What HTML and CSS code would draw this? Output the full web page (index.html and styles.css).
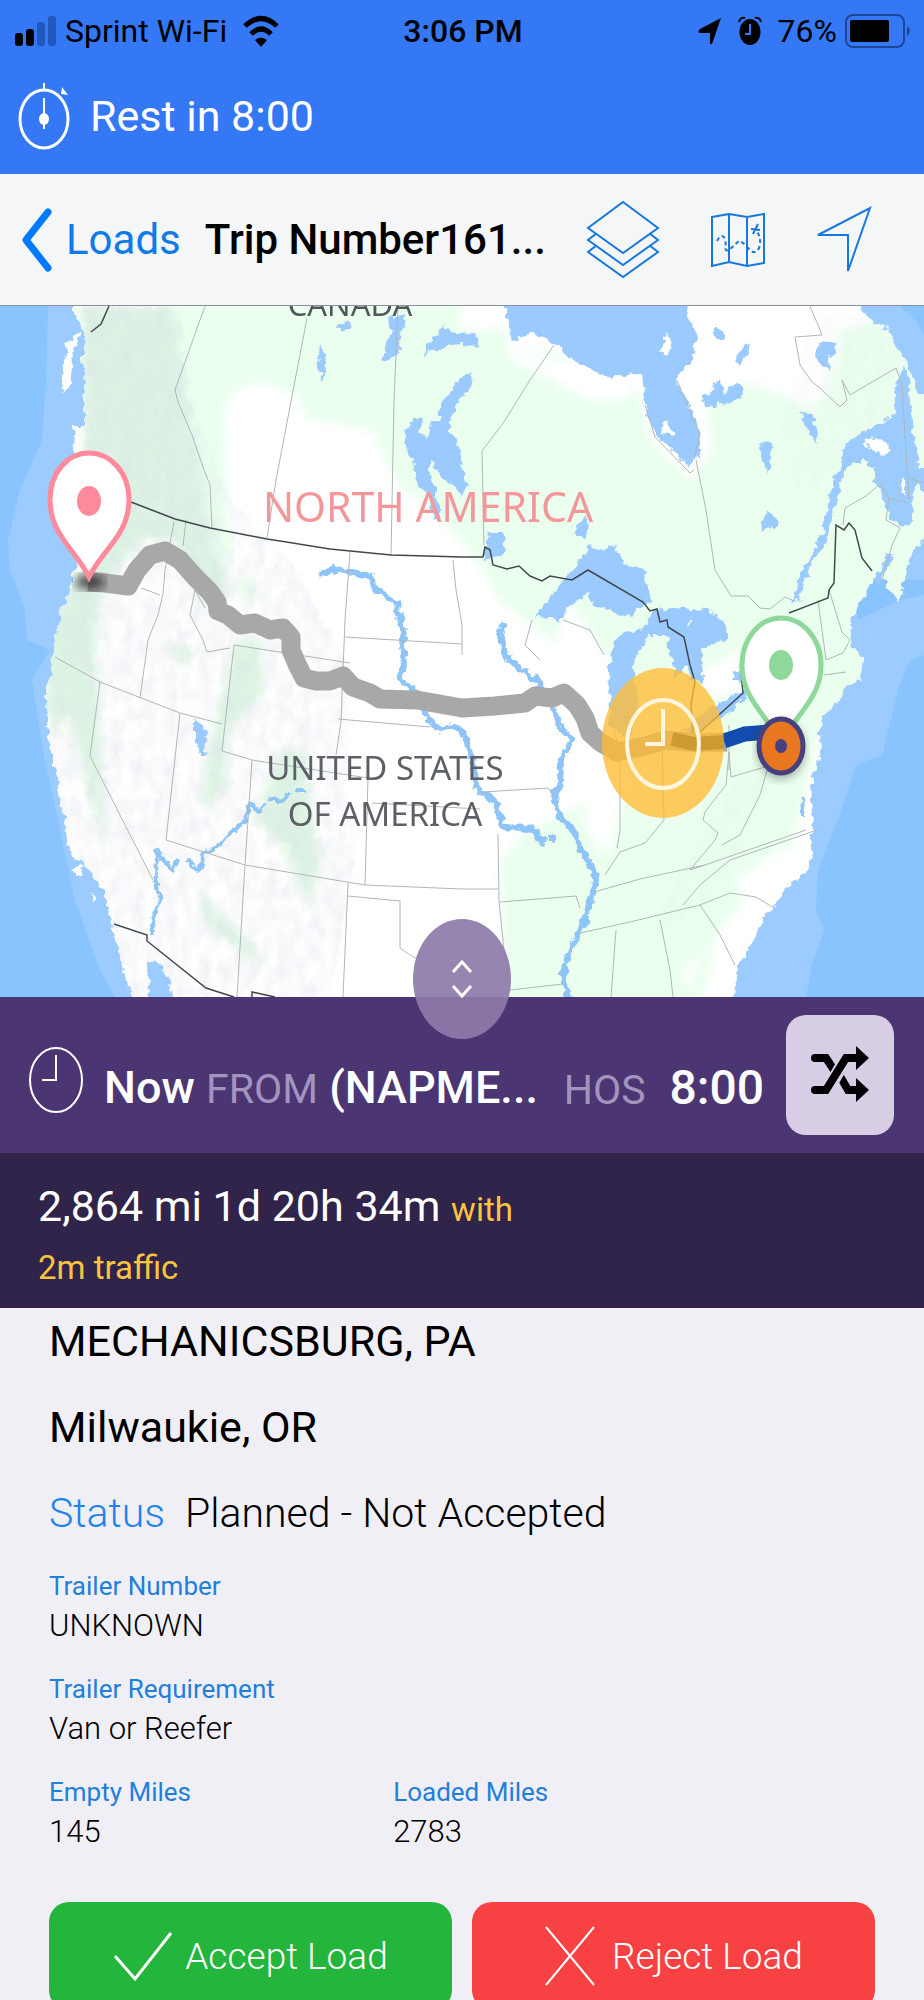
FILE: index.html
```html
<!DOCTYPE html>
<html lang="en">
<head>
<meta charset="utf-8">
<meta name="viewport" content="width=device-width, initial-scale=1">
<title>Trip Number161...</title>
<link rel="stylesheet" href="styles.css">
</head>
<body>
<div class="app">
  <header class="top">
    <div class="status">
      <div class="status-left">
        <svg width="42" height="32" viewBox="0 0 42 32" aria-hidden="true"><rect x="0" y="18" width="8" height="13" rx="3"/><rect x="11" y="14" width="8" height="17" rx="3"/><g fill="#2257bd"><rect x="22" y="7" width="8" height="24" rx="3"/><rect x="33" y="1" width="8" height="30" rx="3"/></g></svg>
        <span>Sprint Wi-Fi</span>
        <svg class="wifi" width="36" height="32" viewBox="0 0 36 32" aria-hidden="true"><g fill="none" stroke="#000" stroke-width="5"><path d="M2 11Q18-4 34 11"/><path d="M8 19Q18 9 28 19"/></g><path d="M12 25Q18 20 24 25L18 32Z"/></svg>
      </div>
      <span class="time">3:06 PM</span>
      <div class="status-right">
        <svg width="24" height="28" viewBox="0 0 24 28" aria-hidden="true"><path d="M23 1 14 27Q12 28 12 25V16H2Q-1 15 2 12Z"/></svg>
        <svg width="24" height="30" viewBox="0 0 24 30" aria-hidden="true"><ellipse cx="12" cy="16" rx="10.500" ry="13"/><path d="M1 6Q2 1 7 2M17 2Q22 1 23 6" fill="none" stroke="#000" stroke-width="2"/><path d="M12 8V18H7" fill="none" stroke="#3478f6" stroke-width="2"/></svg>
        <span>76%</span>
        <svg class="battery" width="66" height="36" viewBox="0 0 66 36" aria-hidden="true"><rect x="1" y="2" width="58" height="32" rx="7" fill="none" stroke="#1d4699" stroke-width="2"/><rect x="5" y="7" width="39" height="22" rx="2"/><path d="M62 13Q68 18 62 23Z" fill="#1d4699"/></svg>
      </div>
    </div>
    <div class="rest">
      <svg width="52" height="68" viewBox="0 0 52 68" aria-hidden="true"><g fill="none" stroke="#fff"><ellipse cx="26" cy="37" rx="24" ry="29" stroke-width="3"/><path d="M26 1V8M26 16V47" stroke-width="2"/></g><ellipse cx="26" cy="37" rx="5" ry="6" fill="#fff"/><path d="M43 12 44 5 50 13Z" fill="#fff"/></svg>
      <span>Rest in 8:00</span>
    </div>
  </header>

  <nav class="nav">
    <a class="back" href="#loads">
      <svg width="32" height="64" viewBox="0 0 32 64" aria-hidden="true"><path d="M28 4 6 32 28 60" fill="none" stroke="#007aff" stroke-width="7" stroke-linecap="round" stroke-linejoin="round"/></svg>
      <span>Loads</span>
    </a>
    <h1>Trip Number161...</h1>
    <div class="tools">
      <button type="button" aria-label="Map layers"><svg width="74" height="80" viewBox="0 0 74 80"><g fill="#f5f6f8" stroke="#1579e0" stroke-width="2"><path d="M37 25 72 52 37 77 2 52Z"/><path d="M37 13 72 40 37 65 2 40Z"/><path d="M37 2 72 28 37 53 2 28Z"/></g></svg></button>
      <button type="button" aria-label="Route map"><svg width="56" height="56" viewBox="0 0 56 56"><g fill="none" stroke="#1579e0" stroke-width="2"><path d="M2 5 19 2 37 5 54 2V51L37 54 19 50 2 54ZM19 2V50M37 5V54"/><path d="M41 17 50 18M48 12 43 22"/><path d="M7 29Q12 20 15 27C17 35 13 40 19 38L29 29Q33 30 38 36 45 44 49 36 52 26 47 20" stroke-dasharray="4 3"/></g></svg></button>
      <button type="button" aria-label="My location"><svg width="56" height="68" viewBox="0 0 56 68"><path d="M54 2 32 65V29H2Z" fill="none" stroke="#1579e0" stroke-width="2"/></svg></button>
    </div>
  </nav>

  <section class="map" aria-label="Route map">
    <svg viewBox="0 306 924 691" role="img">
      <defs>
        <filter id="soft" x="-10%" y="-10%" width="120%" height="120%"><feGaussianBlur stdDeviation="5"/></filter>
        <filter id="rough" filterUnits="userSpaceOnUse" x="-10" y="296" width="944" height="711"><feTurbulence type="fractalNoise" baseFrequency="0.14" numOctaves="2" seed="7" result="t"/><feDisplacementMap in="SourceGraphic" in2="t" scale="9" xChannelSelector="R" yChannelSelector="G"/></filter>
        <filter id="relief" x="0" y="0" width="100%" height="100%"><feTurbulence type="fractalNoise" baseFrequency="0.09 0.05" numOctaves="3" seed="4"/><feColorMatrix values="0 0 0 0 .7  0 0 0 0 .72  0 0 0 0 .8  .7 0 0 0 -.2" result="n"/><feComposite in="n" in2="SourceGraphic" operator="in" result="c"/><feGaussianBlur in="c" stdDeviation="1"/></filter>
        <clipPath id="land"><path id="coast" d="M70 296 80 325 86 340 82 360 85 380 83 400 86 415 82 428 73 425 74 448 90 470 82 520 75 570 62 610 54 640 52 670 46 690 47 722 51 755 58 775 60 800 67 832 71 855 82 862 94 878 104 892 111 922 118 948 124 975 136 1007H149L148 961 158 963 170 980 173 1007H734L738 965 748 950 756 936 765 915 774 908 784 890 795 881 806 874 812 856 810 838 814 825 810 800 813 775 821 755 820 730 824 715 840 700 846 687 860 678 863 658 852 645 850 622 862 600 872 580 880 570 886 584 898 601 906 570 914 548 934 530V506L918 484 914 490 912 520 903 528 890 518 885 508 880 490 873 482 875 470 862 460 848 468 842 480 834 510 826 545 812 562 802 590 800 600 792 603 800 575 811 555 823 530 829 500 833 477 840 470 844 444 893 416 895 390 899 380 902 366 907 370 909 390 912 420 914 440 918 465 934 470V400L918 395 908 362 902 356 888 330 870 320 852 296Z"/></clipPath>
      </defs>
      <rect y="306" width="924" height="691" fill="#8ac4ff"/>
      <path fill="#9cccff" d="M48 306 46 380 42 440 20 490 8 540 10 570 25 610 27 640 50 650 32 680 45 760 58 820 75 900 100 970 115 997H200V306ZM924 655 910 660 898 690 882 755 856 765 838 820 818 870 816 910 824 930 812 965 806 997H700V560H850L858 620 900 600 924 595ZM850 306H900L915 320 924 335V580H800Z"/>
      <g filter="url(#rough)">
        <use href="#coast" fill="#fff"/>
        <g clip-path="url(#land)">
          <g filter="url(#soft)" fill="#eaffee">
            <path fill="#ddf4e4" d="M80 306H180L195 400 215 500 228 590 205 610 190 580 175 540 140 540 118 570 100 600 95 640 98 700 106 850 90 800 65 690 45 720 50 620 80 570 86 500Z"/>
            <path d="M170 296H500L510 350 560 352 600 385 640 390 650 440 690 480 712 450 705 390 760 385 810 410 835 370 840 330 880 320 940 360V600L850 700 824 720 790 850 760 880 720 930 700 1007H505L500 860 530 830 590 800 600 860 640 760 600 680 500 600 482 570 460 540 420 500 395 480 372 430 305 418 300 400 262 380 235 390 224 410 226 500 232 560 215 560Z"/>
            <path d="M245 600Q230 590 240 580T260 600Z"/>
            <path fill="#def6e3" d="M235 640H262L262 695 228 730 225 790 200 810 215 720ZM165 640 195 650 185 668ZM255 820 280 750 305 750 310 800 320 860 310 910 285 850ZM198 890 255 950 260 970 205 920ZM65 640 95 650 98 780 105 840 85 780 68 710 55 740 48 690Z"/>
            <path fill="#fff" d="M650 296H850L825 350 830 400 760 385 690 395ZM500 296 515 350 600 370 640 385 620 402 590 400 510 360ZM460 296H505V330H460ZM568 600 610 660 640 720 610 850 585 830 590 760 540 700ZM800 850 775 870 745 900 735 880 780 850ZM715 940 755 910 700 960 690 990 680 975ZM690 675 740 650 745 685 715 700Z"/>
          </g>
          <g filter="url(#relief)"><path fill="#fff" d="M85 306H180L190 400 230 500 290 560 345 660 355 860 330 997H130L40 760 50 620 85 560Z"/><path fill="#fff" d="M815 306 900 330 890 420 800 500 780 430ZM735 780 775 770 725 890 650 940 670 890Z" opacity=".4"/></g>
        </g>
        <path fill="#fff" d="M80 330 72 365 70 385 63 393 62 378 66 345ZM862 440 870 437 884 440 891 450 884 456 872 450ZM72 868 84 866 83 873 75 873ZM93 892 99 898 94 903ZM901 478H904V492H901Z"/>
        <g fill="#9acaff">
          <path d="M503 296 512 342 530 332 555 345 575 362 609 377 642 373 645 403 654 433 675 453 689 467 696 455 700 462 700 433 690 405 675 380 692 360 697 337 683 296ZM535 617 559 587 575 567 590 545 600 550 615 547 625 565 642 567 652 600 637 611 622 617 609 610 595 607 589 593 572 603 559 622 550 618ZM655 610 672 608 709 610 722 620 729 637 712 645 702 650 703 683 690 680 687 665 675 680 667 635 649 635 640 650 632 665 638 700 629 740 610 725 609 670 614 640 625 632 642 629ZM679 733 712 707 750 687 746 697 729 713 702 730ZM731 680 742 661 748 666 744 685ZM485 545 490 532 502 532 506 550 500 556 484 560ZM575 528 585 515 590 535 585 539 575 535ZM761 520 769 511 778 520 778 526 762 530Z"/>
          <path d="M382 360 391 330 388 320 403 314 405 325 399 338 400 352 388 360ZM320 343 324 354 326 372 322 382 318 368ZM337 328 345 320 353 325 351 331ZM422 357 430 340 440 333 442 325 454 333 474 332 480 347 464 344 448 345 440 351 429 349ZM403 443 408 425 416 416 423 418 420 432 428 440 431 423 440 420 440 403 450 395 462 376 471 372 472 385 458 400 450 418 450 433 459 445 463 465 466 485 462 495 448 480 442 480 432 460 428 470 434 485 441 518 434 518 427 490 417 487 413 460ZM714 327 725 335 725 341 714 335ZM737 353 750 343 748 355 738 365ZM701 395 714 392 713 382 721 383 724 393 734 384 742 386 743 396 724 405 717 400 714 408 704 407ZM816 355 822 340 835 343 836 353 828 357 830 370 821 365ZM799 411 813 415 819 445 808 430ZM761 442 773 443 768 475 762 456ZM194 721 204 727 207 737 205 750 210 754 201 754 194 739ZM886 552 893 555 884 575 880 588 877 580Z"/>
        </g>
        <path fill="#fff" d="M664 333 672 340 670 350 663 355 661 350 666 340ZM660 428 665 420 668 426 674 435 662 433ZM688 620 692 622 690 625 688 624Z"/>
        <g fill="none" stroke="#8fc4f7" stroke-linejoin="round">
          <path stroke-width="6" d="M320 575 333 569 353 572 372 577 373 588 384 594 397 604 399 618 404 630 402 645 404 665 399 680 411 687 420 697 427 718 440 730 453 726 465 735 472 762 478 790 494 800 504 828 515 826 530 828 545 843M505 622 500 635 505 654 520 670 539 682 552 705 560 727 572 740 561 760 560 787 553 795 562 820 575 832 580 850 594 870 596 885 590 900 585 920 578 935 568 955 563 975 568 997M548 838 556 838"/>
          <path stroke-width="4" d="M305 790H295M290 792 283 801 268 799M263 802 260 812 249 804 247 818 235 830 213 850 204 852 199 871 187 860M178 860 174 872 164 860 157 851 156 880 160 902 152 920 153 935M802 795 803 815"/>
        </g>
      </g>
      <g fill="none" stroke="#b0b6b6" stroke-width="1">
        <path d="M205 306 175 390 178 402 192 435 203 467 210 485 212 528M307 318 276 480 267 538M398 306 394 400 391 556M554 345 530 380 504 422 482 451 484 545M696 460 706 510 715 570 731 596 748 596 760 608 770 609 785 597 792 600M174 522 165 570 163 594 158 615 148 640 140 698M186 520 183 546M141 588 160 595M350 552 345 620 341 722 336 755M345 637 462 644M453 560 456 590 462 625 462 655M55 657 100 682 180 713 222 724M100 682 90 756 153 880M180 713 166 840 245 865 365 885 462 889 498 889M234 645 350 663M234 645 222 751 252 760 335 773 368 778 365 885M252 760 245 865 237 997M338 719 430 727M372 803 462 808 480 809M348 883 343 997M348 896 400 901 400 948 410 955 420 960 485 970M498 834 499 901 504 950 510 990 563 984M482 792 548 788 553 795M500 902 576 896 580 908M580 933 630 922 700 905 730 893 756 897 774 908M594 892 640 879 705 865 806 830M616 930 611 997M660 920 670 970 673 997M700 905 720 935 735 965M662 740 664 820 645 843 620 852 605 875M612 720 620 755 620 830 617 848M705 865 690 870 715 840 718 833 703 820 705 812 726 785 729 752 731 777 765 767M768 767 760 795 740 835 722 845M729 725V770M817 830 730 860 700 885 683 905M694 470 690 473 655 437 645 405M677 380 700 435 694 460M810 306 822 335 795 337 800 365 812 382 820 388 840 407 847 400 842 380 850 395 896 368 902 385 909 500M909 478 924 483M880 484 889 498 908 503M843 525 845 508 866 496 880 484M889 498 886 520 900 528 892 545 882 580M829 590 842 632 850 640 843 653 826 660 818 600M824 675 846 672M205 608 195 590 190 615 203 640 207 652 230 648M532 620 525 645 540 660M563 620 590 630 604 655"/>
      </g>
      <g fill="none" stroke="#42494d" stroke-width="1.500">
        <path d="M109 306 101 324 91 332M131 502 175 519 210 528 267 539 330 549 391 555 462 557H483L485 547 490 550 493 565 507 569 519 566 530 576 542 581 550 576 572 580 588 570 643 602 650 611 657 609 660 622 667 620 668 627 684 637 690 665 695 682 691 704 693 733M789 613 828 598 829 590 834 583 836 525 844 530 849 523 855 530 862 558 872 571M700 732 743 693 741 673"/>
        <path d="M114 924 147 935 147 941 206 988 234 997M252 997V992L275 997"/>
      </g>
      <path fill="none" stroke="#a8a8a8" stroke-width="19" stroke-linejoin="round" d="M88 582 105 583 128 586 137 570 150 555 165 551 180 560 195 577 210 592 217 602 218 611 228 615 240 625 255 623 270 630 283 628 291 637 291 650 297 664 304 678 316 681 330 681 343 676 353 687 370 693 380 699 417 700 462 708 495 706 525 703 535 696 552 698 564 693 577 705 585 718 590 733 600 742 617 752 645 746 665 740 700 743 727 742"/>
      <path fill="none" stroke="#124cae" stroke-width="15" d="M724 741 745 734 770 732"/>
      <ellipse cx="663" cy="743" rx="61" ry="75" fill="#ffbc35" fill-opacity=".78"/>
      <path fill="none" stroke="#8e6500" stroke-opacity=".35" stroke-width="14" d="M672 739 695 744 724 742"/>
      <g fill="none" stroke="#fff6dd" stroke-width="4"><ellipse cx="663" cy="744" rx="36" ry="44"/><path d="M663 709V744H645"/></g>
      <g class="map-labels" text-anchor="middle">
        <text class="canada" x="350" y="316">CANADA</text>
        <text class="continent" x="428" y="522">NORTH AMERICA</text>
        <text x="385" y="780">UNITED STATES</text>
        <text x="385" y="826">OF AMERICA</text>
      </g>
      <ellipse cx="90" cy="582" rx="15" ry="8" fill="#111" opacity=".65" filter="url(#soft)"/>
      <g fill="#fff" stroke-width="5">
        <path stroke="#ff8a9c" d="M89 577C76 550 50 535 50 500 50 472 68 453 89 453S129 472 129 500C129 535 102 550 89 577Z"/>
        <path stroke="#8fd89b" d="M781 744C768 715 742 700 742 665 742 638 760 618 781 618S821 638 821 665C821 700 794 715 781 744Z"/>
      </g>
      <ellipse cx="89" cy="501" rx="12" ry="15" fill="#ff8a9c"/>
      <ellipse cx="781" cy="665" rx="12" ry="15" fill="#8fd89b"/>
      <ellipse cx="781" cy="750" rx="24" ry="29" fill="#333" opacity=".4" filter="url(#soft)"/>
      <ellipse cx="781" cy="746" rx="22" ry="27" fill="#e9771f" stroke="#46407f" stroke-width="5"/>
      <ellipse cx="781" cy="746" rx="6" ry="7" fill="#46407f"/>
    </svg>
    <button class="toggle" type="button" aria-label="Resize map"><svg width="24" height="40" viewBox="0 0 24 40"><path d="M3 13 12 3 21 13M3 27 12 37 21 27" fill="none" stroke="#fff" stroke-width="3"/></svg></button>
  </section>

  <section class="trip">
    <svg width="56" height="68" viewBox="0 0 56 68" aria-hidden="true"><g fill="none" stroke="#fff"><ellipse cx="28" cy="34" rx="26" ry="32" stroke-width="2"/><path d="M28 9V34H14" stroke-width="2"/></g></svg>
    <p class="from"><b>Now</b> <span>FROM</span> <b>(NAPME...</b></p>
    <p class="hos"><span>HOS</span><b>8:00</b></p>
    <button type="button" aria-label="Shuffle route"><svg width="60" height="58" viewBox="0 0 60 58"><g fill="none" stroke="#000" stroke-width="8"><path d="M5 12H16L26 27M27 25 38 44H50"/><path d="M13 52 39 7" stroke="#d7cee5" stroke-width="13"/><path d="M5 44H16L36 12H50"/></g><circle cx="5" cy="12" r="4"/><circle cx="5" cy="44" r="4"/><path d="M46 0 59 12 46 24ZM46 32 59 44 46 56Z"/></svg></button>
  </section>

  <section class="distance">
    <p>2,864 mi 1d 20h 34m <span>with<br>2m traffic</span></p>
  </section>

  <main class="details">
    <p class="line">MECHANICSBURG, PA</p>
    <p class="line">Milwaukie, OR</p>
    <p class="line thin"><span>Status</span>Planned - Not Accepted</p>
    <dl>
      <div><dt>Trailer Number</dt><dd>UNKNOWN</dd></div>
      <div><dt>Trailer Requirement</dt><dd>Van or Reefer</dd></div>
      <div class="miles">
        <div><dt>Empty Miles</dt><dd>145</dd></div>
        <div><dt>Loaded Miles</dt><dd>2783</dd></div>
      </div>
    </dl>
    <div class="actions">
      <button class="accept" type="button"><svg width="60" height="52" viewBox="0 0 60 52" aria-hidden="true"><path d="M2 26 22 49 58 3" fill="none" stroke="#fff" stroke-width="3"/></svg>Accept Load</button>
      <button class="reject" type="button"><svg width="52" height="62" viewBox="0 0 52 62" aria-hidden="true"><path d="M2 2 50 60M50 2 2 60" fill="none" stroke="#fff" stroke-width="2"/></svg>Reject Load</button>
    </div>
  </main>
</div>
</body>
</html>
```

FILE: styles.css
```css
* { box-sizing: border-box; }
body { margin: 0; font-family: Roboto, "Liberation Sans", sans-serif; color: #000; }
p, h1, dl, dd { margin: 0; }
button { font: inherit; border: 0; padding: 0; background: none; display: flex; align-items: center; justify-content: center; }
svg { display: block; flex: none; }

.app { display: flex; flex-direction: column; height: 100vh; overflow: hidden; background: #f0eff5; }
.app > * { flex: none; }

.top { background: #3478f6; padding-bottom: 20px; }
.status { display: grid; grid-template-columns: 1fr auto 1fr; align-items: center; height: 62px; padding: 0 13px 0 15px; font-size: 32px; }
.status-left, .status-right { display: flex; align-items: center; gap: 8px; }
.status-left .wifi { margin-left: 8px; }
.status-right { justify-content: flex-end; gap: 16px; }
.status-right .battery { margin-left: -8px; }
.time { font-weight: 500; }
.rest { display: flex; align-items: center; gap: 20px; height: 92px; padding: 20px 18px 4px; color: #fff; font-size: 43px; }

.nav { display: flex; align-items: center; height: 132px; padding: 0 52px 0 20px; background: #f5f6f8; border-bottom: 1px solid #8b9096; }
.back { display: flex; align-items: center; gap: 14px; color: #0f7bea; text-decoration: none; font-size: 42px; }
.nav h1 { margin-left: 24px; font-size: 42px; font-weight: 500; white-space: nowrap; }
.tools { display: flex; align-items: center; justify-content: space-between; flex: 1; margin-left: 40px; }

.map { position: relative; }
.map > svg { width: 100%; height: auto; }
.map-labels { font-family: "Noto Sans", sans-serif; font-size: 33px; fill: #5d6067; }
.map-labels .continent { font-size: 41px; fill: #f4979b; }
.map-labels .canada { font-size: 31px; fill: #50565a; }
.toggle { position: absolute; left: 50%; bottom: -42px; width: 98px; height: 120px; margin-left: -49px; border-radius: 50%; background: rgba(141, 123, 169, .92); }

.trip { display: flex; align-items: center; height: 156px; padding: 0 30px 0 28px; background: #4b3673; color: #fff; font-size: 45px; }
.trip b { font-weight: 500; }
.trip span { color: #a294bd; font-size: 41px; }
.trip .from { margin-left: 20px; padding-top: 24px; white-space: nowrap; }
.trip .hos { display: flex; align-items: baseline; gap: 24px; margin-left: auto; padding-top: 24px; }
.trip .hos b { font-size: 48px; }
.trip > svg { margin-top: 10px; }
.trip button { width: 108px; height: 120px; margin-left: 22px; border-radius: 20px; background: #d7cee5; }

.distance { height: 155px; padding: 26px 38px; background: #30244a; color: #fff; font-size: 43px; line-height: 54px; }
.distance span { color: #f9c440; font-size: 33px; }

.details { padding: 0 49px; }
.line { margin-bottom: 20px; font-size: 43px; line-height: 66px; }
.thin { font-size: 41px; font-weight: 300; }
.thin span { margin-right: 20px; color: #1c84ee; }
dl { display: grid; gap: 23px; line-height: 40px; }
dt { color: #1f7fdc; font-size: 26px; }
dd { font-size: 31px; font-weight: 300; }
.miles { display: grid; grid-template-columns: 5fr 7fr; }
.actions { display: grid; grid-template-columns: 1fr 1fr; gap: 20px; margin-top: 50px; }
.actions button { gap: 12px; height: 108px; border-radius: 20px; color: #fff; font-size: 37px; font-weight: 300; }
.accept { background: #24b53c; }
.reject { background: #f74142; }
.actions .reject { gap: 16px; }
```
